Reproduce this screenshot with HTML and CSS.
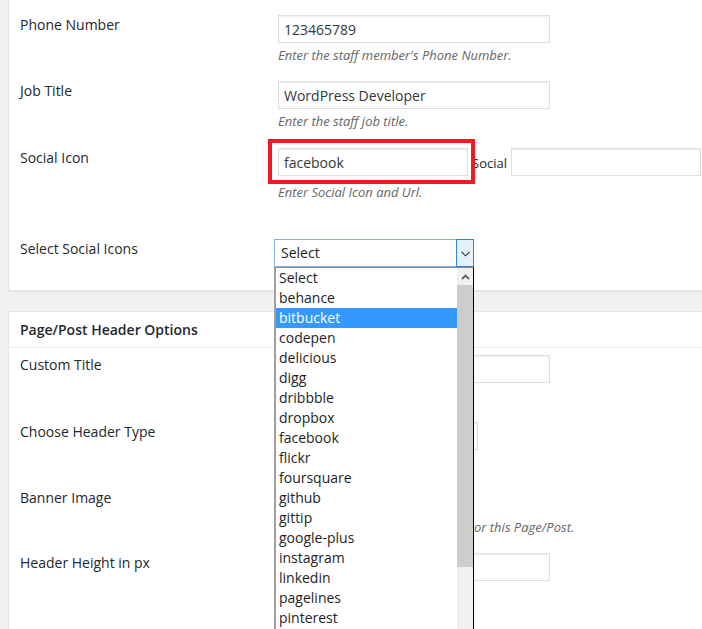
FILE: index.html
```html
<!DOCTYPE html>
<html>
<head>
<meta charset="utf-8">
<link rel="stylesheet" href="styles.css">
</head>
<body>
<div class="page">
  <section class="panel panel-top">
    <div class="row">
      <div class="label">Phone Number</div>
      <div class="field">
        <input class="input w-wide" type="text" value="123465789" readonly>
        <p class="desc">Enter the staff member's Phone Number.</p>
      </div>
    </div>
    <div class="row row-job">
      <div class="label">Job Title</div>
      <div class="field">
        <input class="input w-wide" type="text" value="WordPress Developer" readonly>
        <p class="desc">Enter the staff job title.</p>
      </div>
    </div>
    <div class="row row-social">
      <div class="label">Social Icon</div>
      <div class="field">
        <div class="pair">
          <input class="input w-short" type="text" value="facebook" readonly>
          <span class="pair-label">Social</span>
          <input class="input w-short" type="text" value="" readonly>
        </div>
        <p class="desc desc-social">Enter Social Icon and Url.</p>
      </div>
    </div>
    <div class="row row-select">
      <div class="label">Select Social Icons</div>
      <div class="field">
        <div class="select">
          <span class="select-text">Select</span>
          <span class="select-arrow">
            <svg width="9" height="6" viewBox="0 0 9 6"><polyline points="0.5,0.8 4.5,4.8 8.5,0.8" fill="none" stroke="#333" stroke-width="1.1"/></svg>
          </span>
        </div>
      </div>
    </div>
  </section>

  <section class="panel panel-bottom">
    <h3 class="panel-title">Page/Post Header Options</h3>
    <div class="panel-body">
      <div class="row">
        <div class="label">Custom Title</div>
        <div class="field">
          <input class="input w-wide" type="text" value="" readonly>
        </div>
      </div>
      <div class="row row-type">
        <div class="label">Choose Header Type</div>
        <div class="field">
          <div class="plain-select"></div>
        </div>
      </div>
      <div class="row row-banner">
        <div class="label">Banner Image</div>
        <div class="field">
          <input class="input w-short" type="text" value="" readonly>
          <p class="desc desc-banner">or this Page/Post.</p>
        </div>
      </div>
      <div class="row row-height">
        <div class="label">Header Height in px</div>
        <div class="field">
          <input class="input w-wide" type="text" value="" readonly>
        </div>
      </div>
    </div>
  </section>
</div>

<div class="annotation"></div>

<div class="dropdown">
  <ul class="options">
    <li>Select</li>
    <li>behance</li>
    <li class="on">bitbucket</li>
    <li>codepen</li>
    <li>delicious</li>
    <li>digg</li>
    <li>dribbble</li>
    <li>dropbox</li>
    <li>facebook</li>
    <li>flickr</li>
    <li>foursquare</li>
    <li>github</li>
    <li>gittip</li>
    <li>google-plus</li>
    <li>instagram</li>
    <li>linkedin</li>
    <li>pagelines</li>
    <li>pinterest</li>
  </ul>
  <div class="scrollbar">
    <div class="scroll-up">
      <svg width="9" height="6" viewBox="0 0 9 6"><polyline points="1,5 4.5,1.5 8,5" fill="none" stroke="#606060" stroke-width="1.8"/></svg>
    </div>
    <div class="thumb"></div>
  </div>
</div>
</body>
</html>
```
FILE: styles.css
```css
* { box-sizing: border-box; }
html, body { margin: 0; padding: 0; }
body {
  background: #f1f1f1;
  font-family: "Open Sans", "Liberation Sans", sans-serif;
  color: #23282d;
  width: 702px;
  height: 629px;
  overflow: hidden;
  position: relative;
}
.page { padding-left: 8px; }
.panel {
  background: #fff;
  border: 1px solid #e5e5e5;
  border-right: 0;
  box-shadow: 0 1px 1px rgba(0, 0, 0, .04);
  width: 694px;
}
.panel-top {
  border-top: 0;
  padding: 15px 0 23px 11px;
}
.panel-bottom {
  margin-top: 20px;
  border-bottom: 0;
  box-shadow: none;
}
.panel-title {
  margin: 0;
  padding: 0 11px;
  font-size: 14px;
  font-weight: 600;
  line-height: 35px;
  border-bottom: 1px solid #eee;
}
.panel-body { padding: 7px 0 48px 11px; }

.row { display: flex; }
.row-job { margin-top: 17px; }
.row-social { margin-top: 18px; }
.row-select { margin-top: 38px; }
.row-type { margin-top: 39px; }
.row-banner { margin-top: 38px; }
.row-height { margin-top: 17px; }

.label {
  width: 258px;
  flex: none;
  padding-top: 1px;
  font-size: 14px;
  line-height: 18px;
}
.field { flex: 1; }

.input {
  display: block;
  height: 28px;
  margin: 0;
  border: 1px solid #ddd;
  box-shadow: inset 0 1px 2px rgba(0, 0, 0, .07);
  background: #fff;
  padding: 0 5px;
  font-family: "Open Sans", "Liberation Sans", sans-serif;
  font-size: 14px;
  color: #32373c;
  outline: none;
}
.w-wide { width: 272px; }
.w-short { width: 190px; }

.pair {
  display: flex;
  align-items: baseline;
  font-size: 13px;
}
.pair-label {
  margin: 0 4px;
  color: #23282d;
}

.desc {
  margin: 3px 0 0;
  font-size: 13px;
  line-height: 18px;
  font-style: italic;
  color: #666;
}
.desc-social { margin-top: 7px; }
.desc-banner { margin-top: 2px; padding-left: 196px; }

.select {
  display: flex;
  width: 200px;
  height: 28px;
  margin-left: -4px;
  border: 1px solid #7eb4ea;
  background: #fff;
  font-size: 14px;
  line-height: 26px;
  color: #222;
}
.select-text { flex: 1; padding-left: 6px; }
.select-arrow {
  width: 18px;
  margin: -1px -1px -1px 0;
  border: 1px solid #2b86dd;
  background: #e5f1fb;
  display: flex;
  align-items: center;
  justify-content: center;
  padding-top: 1px;
}

.plain-select {
  width: 200px;
  height: 28px;
  border: 1px solid #ddd;
  box-shadow: inset 0 1px 2px rgba(0, 0, 0, .07);
}

.annotation {
  position: absolute;
  left: 268px;
  top: 139px;
  width: 207px;
  height: 45px;
  border: 4px solid #ed1c24;
}

.dropdown {
  position: absolute;
  left: 274px;
  top: 267px;
  width: 200px;
  height: 362px;
  display: flex;
  background: #fff;
  border-top: 1px solid #8a8a8a;
  border-left: 2px solid #a0a0a0;
  border-right: 1px solid #000;
}
.options {
  flex: 1;
  list-style: none;
  margin: 0;
  padding: 0;
}
.options li {
  height: 20px;
  line-height: 20px;
  padding-left: 3px;
  font-size: 14px;
  color: #1e1e1e;
  white-space: nowrap;
}
.options li.on {
  background: #3399ff;
  color: #fff;
}
.scrollbar {
  width: 16px;
  flex: none;
  background: #f0f0f0;
  display: flex;
  flex-direction: column;
}
.scroll-up {
  height: 17px;
  display: flex;
  align-items: center;
  justify-content: center;
}
.thumb {
  height: 282px;
  background: #cdcdcd;
}
```
